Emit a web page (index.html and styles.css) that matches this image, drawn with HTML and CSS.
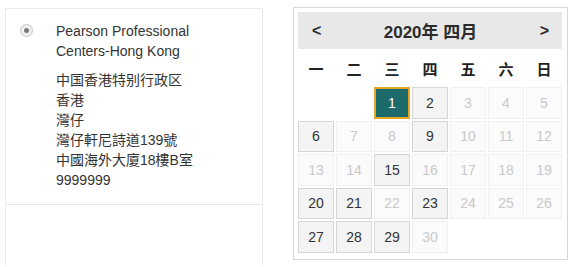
FILE: index.html
```html
<!DOCTYPE html>
<html lang="zh-Hant">
<head>
  <meta charset="UTF-8" />
  <meta name="viewport" content="width=device-width, initial-scale=1.0"/>
  <title>Test Center - Pick a Date</title>
  <link rel="stylesheet" href="styles.css">
</head>
<body>

  <div class="center-list">
    <div class="center-item">
      <span class="radio"></span>
      <div class="center-info">
        <div class="center-name">Pearson Professional<br>Centers-Hong Kong</div>
        <div class="center-address">
          中国香港特别行政区<br>
          香港<br>
          灣仔<br>
          灣仔軒尼詩道139號<br>
          中國海外大廈18樓B室<br>
          9999999
        </div>
      </div>
    </div>
    <div class="center-item empty"></div>
  </div>

  <div class="calendar">
    <div class="calendar-header">
      <span class="nav">&lt;</span>
      <span class="month">2020年 四月</span>
      <span class="nav">&gt;</span>
    </div>
    <div class="weekdays">
      <span>一</span><span>二</span><span>三</span><span>四</span><span>五</span><span>六</span><span>日</span>
    </div>
    <div class="days" id="days"></div>
  </div>

  <script>
    const available = [2, 6, 9, 15, 20, 21, 23, 27, 28, 29];
    const selected = 1;
    const firstWeekday = 2; // April 1st 2020 is a Wednesday
    const days = document.getElementById('days');

    for (let i = 0; i < firstWeekday; i++) {
      days.appendChild(document.createElement('span'));
    }

    for (let d = 1; d <= 30; d++) {
      const cell = document.createElement('span');
      cell.textContent = d;
      cell.classList.add('day');
      if (d === selected) {
        cell.classList.add('day-selected');
      } else if (!available.includes(d)) {
        cell.classList.add('day-disabled');
      }
      days.appendChild(cell);
    }
  </script>
</body>
</html>
```

FILE: styles.css
```css
body {
    font-family: 'Liberation Sans', Arial, 'Noto Sans CJK TC', sans-serif;
    margin: 0;
    background-color: #ffffff;
    color: #333;
    display: flex;
    align-items: flex-start;
    height: 267px;
    overflow: hidden;
}

.center-list {
    width: 258px;
    margin: 8px 0 0 5px;
    border: 1px solid #ebebeb;
    border-bottom: none;
    box-sizing: border-box;
}

.center-item {
    display: flex;
    padding: 12px 0 14px 0;
    border-bottom: 1px solid #e6e6e6;
}

.center-item.empty {
    height: 61px;
    padding: 0;
    border-bottom: none;
}

.radio {
    width: 11px;
    height: 11px;
    margin: 3px 0 0 14px;
    border: 1px solid #c8c8c8;
    border-radius: 50%;
    background-color: #f0f0f0;
    position: relative;
    flex-shrink: 0;
}

.radio::after {
    content: '';
    position: absolute;
    left: 3px;
    top: 3px;
    width: 5px;
    height: 5px;
    border-radius: 50%;
    background-color: #7a7a7a;
}

.center-info {
    margin-left: 23px;
    font-size: 14px;
    line-height: 20px;
}

.center-name {
    margin-bottom: 9px;
}

.calendar {
    width: 275px;
    margin: 7px 0 0 30px;
    padding: 4px 5px 6px 4px;
    border: 1px solid #d6d6d6;
    box-sizing: border-box;
}

.calendar-header {
    display: flex;
    justify-content: space-between;
    align-items: center;
    height: 37px;
    padding: 0 13px 0 14px;
    background-color: #e8e8e8;
    font-weight: bold;
    font-size: 16px;
    color: #2b2b2b;
}

.month {
    font-size: 17px;
}

.weekdays {
    display: grid;
    grid-template-columns: repeat(7, 36px);
    column-gap: 2px;
    height: 38px;
    align-items: center;
    font-weight: bold;
    font-size: 15px;
    color: #222;
}

.weekdays span {
    text-align: center;
}

.days {
    display: grid;
    grid-template-columns: repeat(7, 36px);
    grid-auto-rows: 31.5px;
    gap: 2px;
}

.day {
    display: flex;
    justify-content: center;
    align-items: center;
    font-size: 14px;
    color: #333;
    background-color: #f4f4f4;
    border: 1px solid #d6d6d6;
    box-sizing: border-box;
}

.day-disabled {
    color: #c9c9c9;
    background-color: #fbfbfb;
    border-color: #f0f0f0;
}

.day-selected {
    color: #ffffff;
    background-color: #1d6a6a;
    border: 2px solid #e7a623;
}
```
